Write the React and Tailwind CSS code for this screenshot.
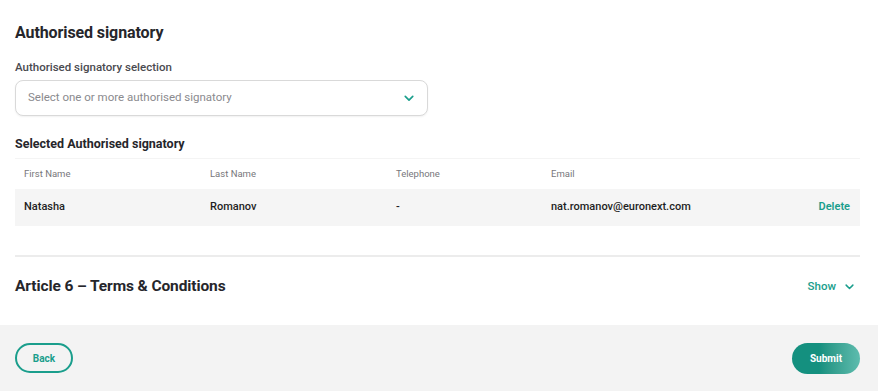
import React from 'react';

const Chevron = ({ className }) => (
  <svg viewBox="0 0 12 8" className={className} fill="none">
    <path d="M1.5 1.5L6 6l4.5-4.5" stroke="currentColor" strokeWidth="2" strokeLinecap="round" strokeLinejoin="round" />
  </svg>
);

const signatories = [
  { first: 'Natasha', last: 'Romanov', phone: '-', email: 'nat.romanov@euronext.com' },
];

export default function App() {
  return (
    <div className="w-[878px] h-[391px] flex flex-col bg-white text-[#26262b] font-['Roboto',sans-serif] overflow-hidden">
      <div className="flex-1 px-[15px] pt-[22px] pr-[18px]">
        {/* Authorised signatory */}
        <h2 className="text-[16px] leading-[22px] font-bold tracking-[-0.1px]">Authorised signatory</h2>
        <label className="block mt-[16px] text-[11.5px] leading-[14px] font-medium text-[#4a4a4f]">
          Authorised signatory selection
        </label>
        <button className="mt-[6px] w-[413px] h-[36px] flex items-center justify-between pl-[12px] pr-[13px] border border-[#d9d9d9] rounded-[8px] bg-white shadow-[0_1px_2px_rgba(0,0,0,0.06)]">
          <span className="text-[11.5px] text-[#8a8a8e]">Select one or more authorised signatory</span>
          <Chevron className="w-[10px] h-[7px] text-[#1a9e8c]" />
        </button>

        <h3 className="mt-[20px] text-[12.5px] leading-[16px] font-bold">Selected Authorised signatory</h3>

        <table className="mt-[6px] w-full text-left border-t border-[#f4f4f4]">
          <thead>
            <tr className="h-[30px] text-[9.5px] text-[#77777b]">
              <th className="pl-[9px] w-[195px] font-normal">First Name</th>
              <th className="w-[186px] font-normal">Last Name</th>
              <th className="w-[155px] font-normal">Telephone</th>
              <th className="font-normal">Email</th>
              <th></th>
            </tr>
          </thead>
          <tbody>
            {signatories.map((s) => (
              <tr key={s.email} className="h-[37px] bg-[#f5f5f5] text-[11px] font-medium text-[#1f1f24]">
                <td className="pl-[9px]">{s.first}</td>
                <td>{s.last}</td>
                <td>{s.phone}</td>
                <td>{s.email}</td>
                <td className="pr-[10px] text-right text-[#1a9e8c] font-semibold">Delete</td>
              </tr>
            ))}
          </tbody>
        </table>

        <div className="mt-[29px] h-[2px] bg-[#ececec]" />

        <div className="flex items-center justify-between h-[60px]">
          <h2 className="text-[15.5px] font-bold tracking-[-0.1px]">Article 6 – Terms &amp; Conditions</h2>
          <button className="flex items-center gap-[9px] pr-[6px] text-[11.5px] font-medium text-[#1a9e8c]">
            Show
            <Chevron className="w-[9px] h-[6px]" />
          </button>
        </div>
      </div>

      {/* Footer */}
      <div className="h-[66px] bg-[#f3f3f3] flex items-center justify-between px-[15px] pr-[18px]">
        <button className="w-[58px] h-[30px] rounded-full border-2 border-[#1a9e8c] text-[10px] font-bold text-[#1a9e8c]">
          Back
        </button>
        <button className="w-[68px] h-[31px] rounded-full bg-gradient-to-r from-[#14907f] from-40% to-[#5dbcae] text-[10px] font-bold text-white">
          Submit
        </button>
      </div>
    </div>
  );
}
